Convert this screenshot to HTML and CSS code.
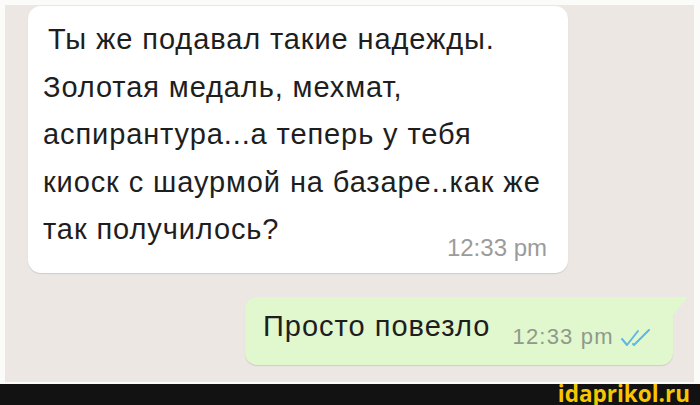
FILE: index.html
```html
<!DOCTYPE html>
<html lang="ru">
<head>
    <meta charset="UTF-8">
    <title>Просто повезло</title>
    <link rel="stylesheet" href="styles.css">
</head>
<body>

    <!-- Chat screenshot -->
    <div class="screen">
        <div class="bubble incoming">
            <div class="line first">Ты же подавал такие надежды.</div>
            <div class="line">Золотая медаль, мехмат,</div>
            <div class="line">аспирантура...а теперь у тебя</div>
            <div class="line">киоск с шаурмой на базаре..как же</div>
            <div class="line last">
                <span>так получилось?</span>
                <span class="time">12:33 pm</span>
            </div>
        </div>

        <div class="bubble outgoing">
            <span class="msg">Просто повезло</span>
            <span class="time">12:33 pm</span>
            <svg class="ticks" width="32" height="18" viewBox="0 0 32 18">
                <path d="M2 10 L7 16 L18 2" />
                <path d="M13 15 L14 16 L29 1" />
            </svg>
        </div>
    </div>

    <!-- Watermark bar -->
    <div class="footer">
        <span class="brand">idaprikol.ru</span>
    </div>

</body>
</html>
```

FILE: styles.css
```css
/* General */
body {
    margin: 0;
    background: #fbfbfa;
    font-family: "Liberation Sans", Arial, sans-serif;
    color: #1e1e1e;
}

.screen {
    height: 377px;
    margin: 5px 6px 0 5px;
    background: #ece7e2;
    display: flex;
    flex-direction: column;
    align-items: flex-start;
}

/* Bubbles */
.bubble {
    position: relative;
    box-sizing: border-box;
    box-shadow: 0 1px 1px rgba(0, 0, 0, 0.12);
}

.incoming {
    width: 540px;
    height: 267px;
    margin: 1px 0 0 23px;
    padding: 10px 21px 0 15px;
    background: #fff;
    border-radius: 13px;
}

.line {
    font-size: 29px;
    letter-spacing: 0.9px;
    line-height: 47.5px;
    white-space: nowrap;
}

.first {
    padding-left: 5px;
}

.last {
    display: flex;
    justify-content: space-between;
    align-items: flex-end;
}

.incoming .time {
    font-size: 24px;
    line-height: 24px;
    letter-spacing: 0;
    color: #9b9b9b;
    margin-bottom: -6px;
}

.outgoing {
    align-self: flex-end;
    width: 428px;
    height: 68px;
    margin: 24px 21px 0 0;
    padding: 14px 0 0 18px;
    background: #e1f7ce;
    border-radius: 12px 0 12px 12px;
    display: flex;
    align-items: flex-start;
}

.outgoing::after {
    content: "";
    position: absolute;
    top: 0;
    right: -15px;
    border-top: 18px solid #e1f7ce;
    border-right: 15px solid transparent;
}

.msg {
    font-size: 29px;
    letter-spacing: 1px;
    line-height: 30px;
}

.outgoing .time {
    font-size: 22px;
    line-height: 22px;
    letter-spacing: 1.2px;
    color: #8f9a8c;
    margin: 15px 0 0 22px;
}

.ticks {
    margin: 18px 0 0 6px;
    fill: none;
    stroke: #5cb8e6;
    stroke-width: 2;
    stroke-linecap: round;
    stroke-linejoin: round;
}

/* Footer */
.footer {
    height: 21px;
    margin-top: 2px;
    background: #121212;
    display: flex;
    justify-content: flex-end;
    align-items: flex-start;
    padding-right: 10px;
    overflow: hidden;
}

.brand {
    font-family: "Open Sans", sans-serif;
    font-weight: 700;
    font-size: 22.5px;
    line-height: 22px;
    margin-top: -1px;
    color: #f7c600;
}
```
